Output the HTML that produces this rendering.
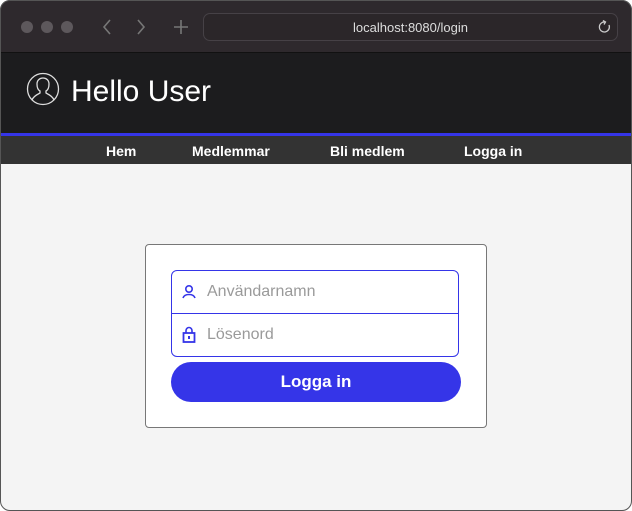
<!DOCTYPE html>
<html><head><style>
*{box-sizing:border-box;margin:0;padding:0}
body{width:632px;height:511px;background:#fff;font-family:"Liberation Sans",sans-serif;overflow:hidden;position:relative}
.win{position:absolute;left:0;top:0;width:632px;height:511px;border-radius:10px;overflow:hidden;background:#f4f4f4}
.frame{position:absolute;left:0;top:0;width:632px;height:511px;border-radius:10px;border:1px solid #555;pointer-events:none}
.tb{position:absolute;left:0;top:0;width:100%;height:53px;background:#2e292d;border-bottom:1px solid #111}
.dot{position:absolute;top:21px;width:12px;height:12px;border-radius:50%;background:#5d585c}
.url{position:absolute;left:203px;top:13px;width:415px;height:28px;border:1px solid #464146;border-radius:7px;background:#2b2629;color:#ddd;font-size:13px;text-align:center;line-height:27px}
.hd{position:absolute;left:0;top:53px;width:100%;height:80px;background:#1c1c1e}
.hd h1{position:absolute;left:71px;top:22px;font-weight:normal;font-size:30px;color:#fff}
.bl{position:absolute;left:0;top:133px;width:100%;height:3px;background:#3535e8}
.nav{position:absolute;left:0;top:136px;width:100%;height:28px;background:#333}
.nav span{position:absolute;top:7px;color:#fff;font-weight:bold;font-size:14px}
.card{position:absolute;left:145px;top:244px;width:342px;height:184px;background:#fff;border:1px solid #777;border-radius:4px}
.ig{position:absolute;left:25px;top:25px;width:288px;height:87px;border:1px solid #3535e8;border-radius:6px}
.ig .div{position:absolute;left:0;top:42px;width:100%;height:1px;background:#3535e8}
.ph{position:absolute;left:35px;color:#9a9a9a;font-size:16px}
.btn{position:absolute;left:25px;top:117px;width:290px;height:40px;border-radius:20px;background:#3535e8;color:#fff;font-weight:bold;font-size:17px;text-align:center;line-height:40px}
</style></head><body>
<div class="win">
<div class="tb">
<div class="dot" style="left:21px"></div><div class="dot" style="left:41px"></div><div class="dot" style="left:61px"></div>
<svg style="position:absolute;left:100px;top:18px" width="60" height="18" fill="none" stroke="#777" stroke-width="1.6"><path d="M10 2 L4 9 L10 16"/><path d="M38 2 L44 9 L38 16"/></svg>
<svg style="position:absolute;left:172px;top:18px" width="18" height="18" stroke="#777" stroke-width="1.6"><path d="M9 2V16M2 9H16"/></svg>
<div class="url">localhost:8080/login</div>
<svg style="position:absolute;left:598px;top:20px" width="14" height="14" fill="none" stroke="#ccc" stroke-width="1.3"><path d="M11 5A5 5 0 1 1 7 2"/><path d="M5 0.5L7.5 2L6 4.5"/></svg>
</div>
<div class="hd">
<svg style="position:absolute;left:26px;top:19px" width="34" height="34" fill="none" stroke="#ddd" stroke-width="1.3"><circle cx="17" cy="17" r="15.5"/><path d="M6 28c2-5 7-6 8-7v-2c-2-1-3-4-3-7 0-4 3-6 6-6s6 2 6 6c0 3-1 6-3 7v2c1 1 6 2 8 7"/></svg>
<h1>Hello User</h1>
</div>
<div class="bl"></div>
<div class="nav"><span style="left:106px">Hem</span><span style="left:192px">Medlemmar</span><span style="left:330px">Bli medlem</span><span style="left:464px">Logga in</span></div>
<div class="card">
<div class="ig">
<svg style="position:absolute;left:10px;top:13px" width="14" height="16" fill="none" stroke="#3535e8" stroke-width="1.6"><circle cx="7" cy="5" r="3.2"/><path d="M1 14c1-3 4-3.5 6-3.5s5 .5 6 3.5"/></svg>
<span class="ph" style="top:12px">Användarnamn</span>
<div class="div"></div>
<svg style="position:absolute;left:10px;top:55px" width="14" height="17"><path d="M4 7V4.5a3 3 0 0 1 6 0V7" fill="none" stroke="#3535e8" stroke-width="1.6"/><rect x="1.5" y="7" width="11" height="9" fill="none" stroke="#3535e8" stroke-width="1.8"/><rect x="6" y="10" width="2" height="3" fill="#3535e8"/></svg>
<span class="ph" style="top:55px">Lösenord</span>
</div>
<div class="btn">Logga in</div>
</div>
</div>
<div class="frame"></div>
</body></html>
